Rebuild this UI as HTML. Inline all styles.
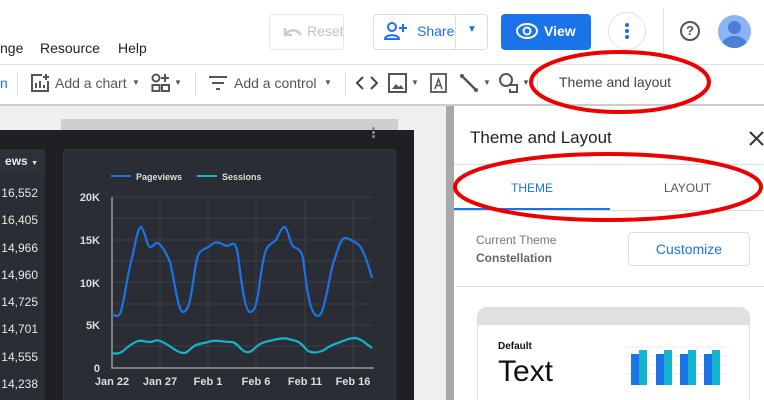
<!DOCTYPE html>
<html><head><meta charset="utf-8"><style>
*{margin:0;padding:0;box-sizing:border-box}
html,body{width:764px;height:400px;overflow:hidden}
body{position:relative;background:#fff;font-family:"Liberation Sans",Arial,sans-serif}
.a{position:absolute}
.t{position:absolute;white-space:nowrap}
</style></head><body>
<!-- header -->
<div class="t" style="left:0;top:40px;font-size:14px;color:#222">nge</div>
<div class="t" style="left:40px;top:40px;font-size:14px;color:#222">Resource</div>
<div class="t" style="left:118px;top:40px;font-size:14px;color:#222">Help</div>
<div class="a" style="left:269px;top:14px;width:75px;height:36px;border:1px solid #e8e8e8;border-radius:4px"></div>
<svg class="a" style="left:281px;top:24px" width="22" height="16"><path d="M4 4v7h7" fill="none" stroke="#ccc" stroke-width="2.5"/><path d="M5 10c4-5 11-5 15 1" fill="none" stroke="#ccc" stroke-width="2.5"/></svg>
<div class="t" style="left:307px;top:23px;font-size:14px;color:#c0c0c0">Reset</div>
<div class="a" style="left:373px;top:14px;width:115px;height:36px;border:1px solid #dadce0;border-radius:4px"></div>
<div class="a" style="left:455px;top:14px;width:1px;height:36px;background:#dadce0"></div>
<svg class="a" style="left:384px;top:21px" width="24" height="20"><circle cx="8" cy="6" r="4" fill="none" stroke="#1a73e8" stroke-width="2"/><path d="M1 18c0-5 14-5 14 0z" fill="none" stroke="#1a73e8" stroke-width="2"/><path d="M19 3v8M15 7h8" stroke="#1a73e8" stroke-width="2"/></svg>
<div class="t" style="left:417px;top:23px;font-size:14px;color:#1a73e8">Share</div>
<div class="t" style="left:467px;top:24px;font-size:10px;color:#1a73e8">▼</div>
<div class="a" style="left:501px;top:14px;width:90px;height:36px;background:#1a73e8;border-radius:4px"></div>
<svg class="a" style="left:515px;top:22px" width="24" height="18"><ellipse cx="12" cy="9" rx="10" ry="7" fill="none" stroke="#fff" stroke-width="2"/><circle cx="12" cy="9" r="3.5" fill="none" stroke="#fff" stroke-width="2"/></svg>
<div class="t" style="left:544px;top:23px;font-size:14px;font-weight:bold;color:#fff">View</div>
<div class="a" style="left:608px;top:12px;width:38px;height:38px;border:1px solid #e3e3e3;border-radius:50%"></div>
<div class="a" style="left:625px;top:23px;width:4px;height:4px;border-radius:50%;background:#1a73e8;box-shadow:0 6px 0 #1a73e8,0 12px 0 #1a73e8"></div>
<div class="a" style="left:663px;top:8px;width:1px;height:46px;background:#e0e0e0"></div>
<div class="a" style="left:680px;top:21px;width:20px;height:20px;border:2px solid #555;border-radius:50%;font-size:13px;font-weight:bold;color:#555;text-align:center;line-height:16px">?</div>
<div class="a" style="left:718px;top:15px;width:33px;height:33px;border-radius:50%;background:#8ab4f8;overflow:hidden"><div class="a" style="left:10px;top:6px;width:13px;height:13px;border-radius:50%;background:#4a7fd4"></div><div class="a" style="left:4px;top:21px;width:25px;height:18px;border-radius:50%;background:#4a7fd4"></div></div>
<!-- toolbar -->
<div class="a" style="left:0;top:64px;width:764px;height:1px;background:#e0e0e0"></div>
<div class="a" style="left:0;top:104px;width:764px;height:2px;background:#ccc"></div>
<div class="t" style="left:0;top:75px;font-size:14px;color:#1a73e8">n</div>
<div class="a" style="left:17px;top:72px;width:1px;height:24px;background:#ddd"></div>
<svg class="a" style="left:30px;top:73px" width="20" height="20"><path d="M12 2H2v16h16V8" fill="none" stroke="#555" stroke-width="2"/><path d="M16 1v6M13 4h6M6 15v-5M10 15v-7M14 15v-3" stroke="#555" stroke-width="2"/></svg>
<div class="t" style="left:55px;top:75px;font-size:14px;color:#555">Add a chart</div>
<div class="t" style="left:132px;top:78px;font-size:8px;color:#555">▼</div>
<svg class="a" style="left:151px;top:73px" width="22" height="20"><circle cx="5" cy="5" r="3.5" fill="none" stroke="#555" stroke-width="2"/><path d="M14 1v8M10 5h8" stroke="#555" stroke-width="2"/><rect x="1.5" y="12" width="7" height="6" fill="none" stroke="#555" stroke-width="2"/><rect x="11" y="12" width="7" height="6" fill="none" stroke="#555" stroke-width="2"/></svg>
<div class="t" style="left:174px;top:78px;font-size:8px;color:#555">▼</div>
<div class="a" style="left:195px;top:72px;width:1px;height:24px;background:#ddd"></div>
<svg class="a" style="left:208px;top:75px" width="20" height="16"><path d="M1 2h18M4 8h12M8 14h4" stroke="#555" stroke-width="2"/></svg>
<div class="t" style="left:234px;top:75px;font-size:14px;color:#555">Add a control</div>
<div class="t" style="left:324px;top:78px;font-size:8px;color:#555">▼</div>
<div class="a" style="left:345px;top:72px;width:1px;height:24px;background:#ddd"></div>
<svg class="a" style="left:356px;top:75px" width="22" height="16"><path d="M7 2L1 8l6 6M15 2l6 6-6 6" fill="none" stroke="#444" stroke-width="2"/></svg>
<svg class="a" style="left:388px;top:73px" width="20" height="20"><rect x="1" y="1" width="17" height="18" fill="none" stroke="#555" stroke-width="2"/><path d="M4 16l4-5 3 3 2-2 3 4z" fill="#555"/></svg>
<div class="t" style="left:411px;top:78px;font-size:8px;color:#555">▼</div>
<svg class="a" style="left:429px;top:72px" width="20" height="22"><rect x="2" y="2" width="15" height="18" fill="none" stroke="#555" stroke-width="1.8"/><path d="M6 17l3.5-10L13 17M7.5 13.5h4" fill="none" stroke="#555" stroke-width="1.5"/></svg>
<svg class="a" style="left:459px;top:73px" width="20" height="20"><path d="M2 2l16 16" stroke="#555" stroke-width="2.5"/><circle cx="3" cy="3" r="2" fill="#555"/><circle cx="17" cy="17" r="2" fill="#555"/></svg>
<div class="t" style="left:483px;top:78px;font-size:8px;color:#555">▼</div>
<svg class="a" style="left:498px;top:72px" width="22" height="22"><circle cx="8" cy="8" r="6" fill="none" stroke="#555" stroke-width="2"/><path d="M12 13h7v7h-7v-3" fill="none" stroke="#555" stroke-width="2"/></svg>
<div class="t" style="left:522px;top:78px;font-size:8px;color:#555">▼</div>
<div class="a" style="left:537px;top:72px;width:1px;height:24px;background:#ddd"></div>
<div class="t" style="left:559px;top:74px;font-size:14px;color:#444">Theme and layout</div>
<!-- canvas -->
<div class="a" style="left:0;top:106px;width:454px;height:294px;background:#efefef"></div>
<div class="a" style="left:61px;top:119px;width:337px;height:12px;background:#cfcfcf"></div>
<div class="a" style="left:0;top:130px;width:414px;height:270px;background:#1f2023"></div>
<div class="a" style="left:372px;top:127px;width:3px;height:3px;border-radius:50%;background:#888;box-shadow:0 4px 0 #888,0 8px 0 #888"></div>
<div class="a" style="left:0;top:149px;width:45px;height:251px;background:#2a2d33"></div>
<div class="a" style="left:0;top:149px;width:45px;height:24px;background:#2c3338"></div>
<div style="position:absolute;left:0;top:154px;width:38px;text-align:right;font-size:12px;color:#e8e8e8;font-weight:bold">ews <span style="font-size:7px">▼</span></div>
<div style="position:absolute;left:0;top:180px;width:38px;text-align:right;font-size:12px;color:#e8e8e8;line-height:27.3px">16,552<br>16,405<br>14,966<br>14,960<br>14,725<br>14,701<br>14,555<br>14,238</div>
<div class="a" style="left:63px;top:149px;width:333px;height:270px;background:#2a2d34;border:1px solid #34373e;border-radius:4px"></div>
<svg class="a" style="left:0;top:0" width="414" height="400">
<g stroke="#3a3e46" stroke-width="1">
<path d="M112 197H373M112 218H373M112 240H373M112 261H373M112 282H373M112 304H373M112 325H373M112 346H373"/>
<path d="M160 197V367M208 197V367M256 197V367M305 197V367M353 197V367"/>
</g>
<path d="M112 197V368H374" fill="none" stroke="#999" stroke-width="1.5"/>
<path d="M111 176h20" stroke="#1a73e8" stroke-width="2"/><path d="M197 176h20" stroke="#12b5cb" stroke-width="2"/>
<text x="136" y="180" font-size="9" font-weight="bold" fill="#ddd" font-family="Liberation Sans">Pageviews</text>
<text x="222" y="180" font-size="9" font-weight="bold" fill="#ddd" font-family="Liberation Sans">Sessions</text>
<g font-size="11" fill="#ddd" font-family="Liberation Sans" font-weight="bold" text-anchor="end">
<text x="100" y="201">20K</text><text x="100" y="244">15K</text><text x="100" y="287">10K</text><text x="100" y="329">5K</text><text x="100" y="372">0</text></g>
<g font-size="11" fill="#ddd" font-family="Liberation Sans" font-weight="bold" text-anchor="middle">
<text x="112" y="385">Jan 22</text><text x="160" y="385">Jan 27</text><text x="208" y="385">Feb 1</text><text x="256" y="385">Feb 6</text><text x="305" y="385">Feb 11</text><text x="353" y="385">Feb 16</text></g>
<path d="M112 314C115 316 117 317 120 314C124 305 127 275 132 258C136 240 138 227 141 227C145 230 147 247 150 247C153 247 155 242 158 243C162 246 166 252 170 262C175 282 178 312 183 312C186 312 188 308 190 300C194 282 195 258 200 252C204 248 206 249 210 246C214 242 216 242 220 243C224 245 226 247 230 245C234 242 236 244 238 255C241 280 245 312 250 312C254 312 256 306 258 295C261 275 263 255 267 248C270 243 272 244 276 240C280 232 282 227 285 227C289 231 290 245 294 247C300 250 301 250 303 258C306 280 309 316 318 316C322 316 324 305 327 292C330 278 331 268 335 258C339 246 341 238 345 238C350 238 354 242 358 244C363 249 367 260 372 278" fill="none" stroke="#1a73e8" stroke-width="2.2"/>
<path d="M112 353C116 354 119 354 123 351C128 347 132 343 138 341C142 340 145 342 150 342C154 342 156 339 160 341C166 343 169 346 174 349C178 352 181 353 184 353C188 353 190 348 196 345C202 343 205 343 212 341C218 340 222 342 232 342C238 343 240 350 246 352C252 353 254 348 260 344C266 341 270 341 278 339C283 338 286 338 292 340C300 341 302 345 308 351C313 353 316 353 322 351C328 348 330 345 338 343C344 341 348 338 355 338C362 339 366 344 372 348" fill="none" stroke="#12b5cb" stroke-width="2.2"/>
</svg>
<div class="a" style="left:446px;top:106px;width:8px;height:294px;background:#a8a8a8"></div>
<!-- right panel -->
<div class="a" style="left:454px;top:106px;width:310px;height:294px;background:#fff"></div>
<div class="t" style="left:470px;top:128px;font-size:17px;color:#222">Theme and Layout</div>
<svg class="a" style="left:748px;top:130px" width="16" height="16"><path d="M2 2l13 13M15 2L2 15" stroke="#333" stroke-width="2"/></svg>
<div class="a" style="left:454px;top:164px;width:310px;height:1px;background:#ddd"></div>
<div class="t" style="left:511px;top:181px;font-size:12px;color:#1a73e8">THEME</div>
<div class="t" style="left:664px;top:181px;font-size:12px;color:#555">LAYOUT</div>
<div class="a" style="left:454px;top:208px;width:156px;height:2px;background:#1a73e8"></div>
<div class="a" style="left:454px;top:210px;width:310px;height:1px;background:#ddd"></div>
<div class="t" style="left:476px;top:233px;font-size:12px;color:#777">Current Theme</div>
<div class="t" style="left:476px;top:251px;font-size:12px;font-weight:bold;color:#666">Constellation</div>
<div class="a" style="left:628px;top:232px;width:122px;height:34px;border:1px solid #dadce0;border-radius:4px;text-align:center;line-height:32px;font-size:14px;color:#1a73e8">Customize</div>
<div class="a" style="left:456px;top:286px;width:308px;height:1px;background:#ddd"></div>
<div class="a" style="left:477px;top:307px;width:273px;height:110px;border:1px solid #ddd;border-radius:10px;overflow:hidden"><div style="height:17px;background:#e0e0e0"></div></div>
<div class="t" style="left:498px;top:341px;font-size:10px;font-weight:bold;color:#111">Default</div>
<div class="t" style="left:498px;top:355px;font-size:30px;color:#111">Text</div>
<svg class="a" style="left:625px;top:345px" width="104" height="40">
<path d="M0 2H104M0 11H104M0 20H104M0 29H104" stroke="#eee"/>
<g fill="#1a73e8"><rect x="6" y="9" width="8" height="31"/><rect x="31" y="9" width="8" height="31"/><rect x="55" y="9" width="8" height="31"/><rect x="79" y="9" width="8" height="31"/></g>
<g fill="#12b5cb"><rect x="14" y="5" width="8" height="35"/><rect x="39" y="5" width="8" height="35"/><rect x="63" y="5" width="8" height="35"/><rect x="87" y="5" width="8" height="35"/></g>
</svg>
<!-- red ellipses -->
<svg class="a" style="left:0;top:0" width="764" height="400">
<ellipse cx="620" cy="82" rx="89" ry="30" fill="none" stroke="#e00" stroke-width="4"/>
<ellipse cx="608" cy="187" rx="153" ry="33" fill="none" stroke="#e00" stroke-width="4"/>
</svg>
</body></html>
